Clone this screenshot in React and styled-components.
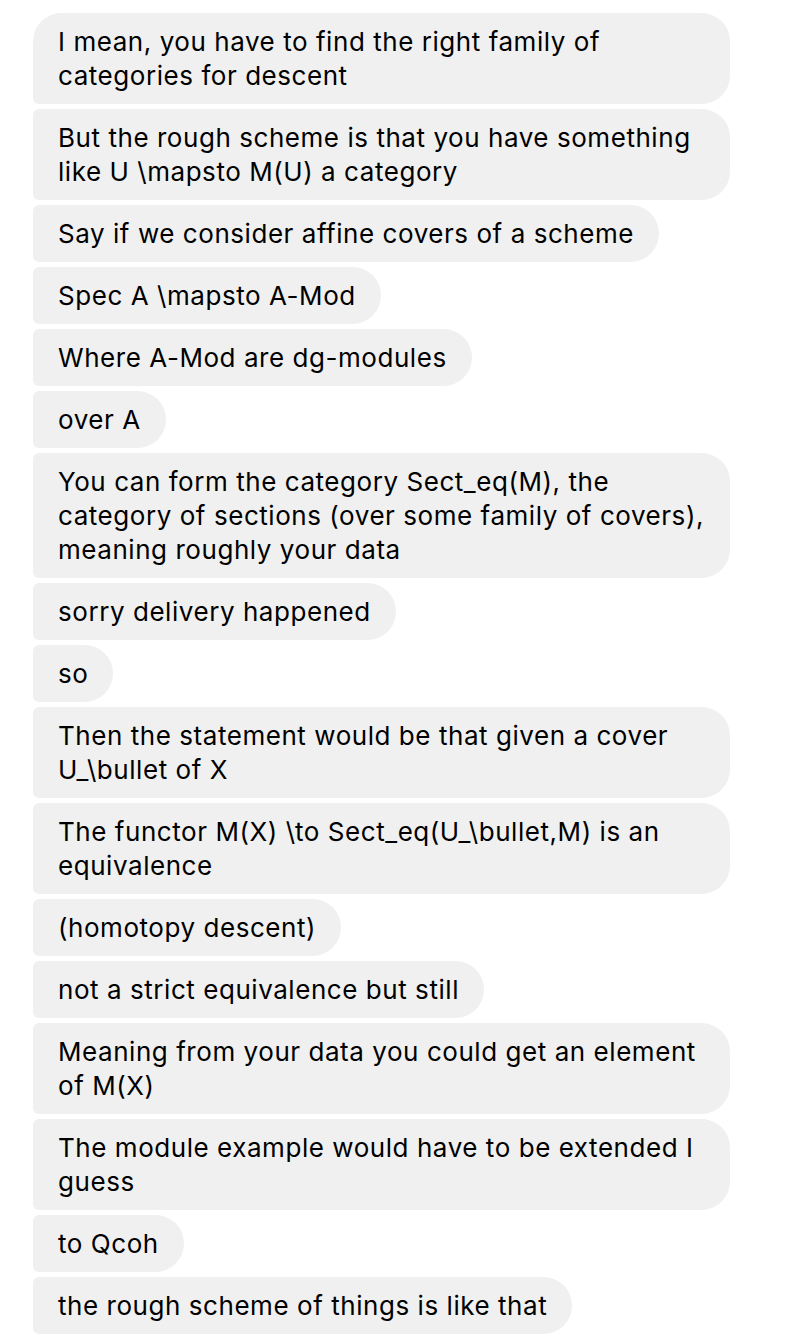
import React from "react";
import styled, { createGlobalStyle } from "styled-components";

const GlobalStyle = createGlobalStyle`
  html, body {
    margin: 0;
    padding: 0;
    background: #ffffff;
  }
  body {
    font-family: Inter, "Noto Sans", "Liberation Sans", sans-serif;
    -webkit-font-smoothing: antialiased;
  }
`;

const Thread = styled.div`
  display: flex;
  flex-direction: column;
  align-items: flex-start;
  gap: 5px;
  padding: 13px 0 0 33px;
  width: 697px;
`;

const Bubble = styled.div`
  background-color: #f0f0f0;
  color: #000000;
  font-size: 26px;
  line-height: 34px;
  letter-spacing: 0.55px;
  padding: 12px 25px 11px;
  border-radius: ${(p) => (p.$first ? "28.5px" : "6px")} 28.5px 28.5px 6px;
  max-width: 697px;
  box-sizing: border-box;
  width: ${(p) => (p.$wide ? "697px" : "auto")};
`;

const Line = styled.div`
  white-space: nowrap;
`;

const messages = [
  ["I mean, you have to find the right family of", "categories for descent"],
  ["But the rough scheme is that you have something", "like U \\mapsto M(U) a category"],
  ["Say if we consider affine covers of a scheme"],
  ["Spec A \\mapsto A-Mod"],
  ["Where A-Mod are dg-modules"],
  ["over A"],
  [
    "You can form the category Sect_eq(M), the",
    "category of sections (over some family of covers),",
    "meaning roughly your data",
  ],
  ["sorry delivery happened"],
  ["so"],
  ["Then the statement would be that given a cover", "U_\\bullet of X"],
  ["The functor M(X) \\to Sect_eq(U_\\bullet,M) is an", "equivalence"],
  ["(homotopy descent)"],
  ["not a strict equivalence but still"],
  ["Meaning from your data you could get an element", "of M(X)"],
  ["The module example would have to be extended I", "guess"],
  ["to Qcoh"],
  ["the rough scheme of things is like that"],
];

const App = () => {
  return (
    <>
      <GlobalStyle />
      <Thread>
        {messages.map((lines, i) => (
          <Bubble key={i} $first={i === 0} $wide={lines.length > 1}>
            {lines.map((l, j) => (
              <Line key={j}>{l}</Line>
            ))}
          </Bubble>
        ))}
      </Thread>
    </>
  );
};

export default App;
